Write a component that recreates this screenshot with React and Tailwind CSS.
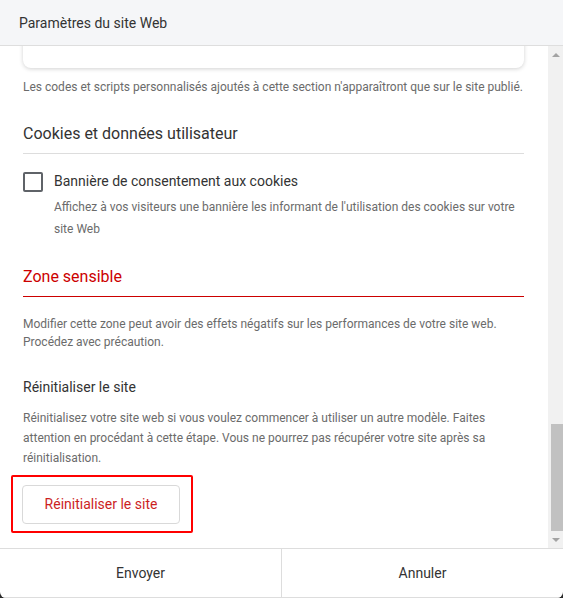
import React from 'react';

const Scrollbar = () => (
  <div className="w-[15px] shrink-0 bg-[#f1f1f1] flex flex-col items-center">
    <div className="h-[17px] w-full flex items-center justify-center">
      <div className="w-0 h-0 border-l-[4px] border-r-[4px] border-b-[4px] border-l-transparent border-r-transparent border-b-[#a3a3a3]" />
    </div>
    <div className="flex-1" />
    <div className="w-[12px] ml-[2px] h-[107px] bg-[#c1c1c1]" />
    <div className="h-[17px] w-full flex items-center justify-center">
      <div className="w-0 h-0 border-l-[4px] border-r-[4px] border-t-[4px] border-l-transparent border-r-transparent border-t-[#a3a3a3]" />
    </div>
  </div>
);

export default function App() {
  return (
    <div
      className="w-[563px] h-[598px] bg-[#2a2a2a] overflow-hidden"
      style={{ fontFamily: 'Roboto, "Liberation Sans", sans-serif' }}
    >
      <div className="w-full h-full bg-white rounded-b-[6px] flex flex-col overflow-hidden">
        {/* Header */}
        <div className="h-[46px] shrink-0 bg-[#f5f6f8] border-b border-[#dedede] flex items-center pl-[19px]">
          <h1 className="text-[14px] text-[#333] leading-5">Paramètres du site Web</h1>
        </div>

        {/* Body */}
        <div className="flex flex-1 min-h-0">
          <div className="flex-1 min-w-0 overflow-hidden pl-[23px] pr-[24px]">
            <div className="-mt-[12px] h-[34px] rounded-[8px] bg-white shadow-[0_1px_4px_rgba(0,0,0,0.18)]" />
            <p className="mt-[10px] text-[12px] leading-[18px] text-[#6b6b6b]">
              Les codes et scripts personnalisés ajoutés à cette section n'apparaîtront que sur le site publié.
            </p>

            <h2 className="mt-[26px] text-[16px] leading-6 text-[#333] pb-[7px] border-b border-[#dddddd]">
              Cookies et données utilisateur
            </h2>

            <div className="mt-[17px] flex gap-[11px]">
              <div className="mt-[1px] w-[20px] h-[20px] shrink-0 rounded-[2px] border-2 border-[#5f6368]" />
              <div>
                <div className="text-[14px] leading-5 text-[#333]">Bannière de consentement aux cookies</div>
                <p className="mt-[5px] text-[12px] leading-[22px] text-[#6b6b6b]">
                  Affichez à vos visiteurs une bannière les informant de l'utilisation des cookies sur votre site Web
                </p>
              </div>
            </div>

            <h2 className="mt-[25px] text-[16px] leading-6 text-[#cc0000] pb-[7px] border-b border-[#cc0000]">
              Zone sensible
            </h2>
            <p className="mt-[18px] text-[12px] leading-[18px] text-[#6b6b6b]">
              Modifier cette zone peut avoir des effets négatifs sur les performances de votre site web. Procédez avec précaution.
            </p>

            <h3 className="mt-[26px] text-[14px] leading-5 text-[#333]">Réinitialiser le site</h3>
            <p className="mt-[11px] text-[12px] leading-5 text-[#6b6b6b]">
              Réinitialisez votre site web si vous voulez commencer à utiliser un autre modèle. Faites attention en procédant à cette étape. Vous ne pourrez pas récupérer votre site après sa réinitialisation.
            </p>

            <div className="mt-[7px] -ml-[12px] w-[182px] h-[58px] border-2 border-[#ff0000] rounded-[2px] pl-[9px] pt-[8px]">
              <button className="w-[158px] h-[39px] rounded-[4px] border border-[#d9d9d9] bg-white text-[14px] text-[#cc1f1f]">
                Réinitialiser le site
              </button>
            </div>
          </div>
          <Scrollbar />
        </div>

        {/* Footer */}
        <div className="h-[50px] shrink-0 border-t border-b border-[#dddddd] flex">
          <button className="w-[282px] h-full border-r border-[#dddddd] text-[14px] text-[#333]">Envoyer</button>
          <button className="flex-1 h-full text-[14px] text-[#333]">Annuler</button>
        </div>
      </div>
    </div>
  );
}
